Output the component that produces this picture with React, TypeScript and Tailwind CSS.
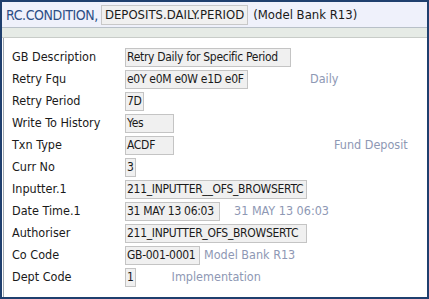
import React from "react";

const rows: { label: string; value: string; w: number; note?: string; noteGap?: number }[] = [
  { label: "GB Description", value: "Retry Daily for Specific Period", w: 166 },
  { label: "Retry Fqu", value: "e0Y e0M e0W e1D e0F", w: 123, note: "Daily", noteGap: 62 },
  { label: "Retry Period", value: "7D", w: 19 },
  { label: "Write To History", value: "Yes", w: 49 },
  { label: "Txn Type", value: "ACDF", w: 49, note: "Fund Deposit", noteGap: 160 },
  { label: "Curr No", value: "3", w: 9 },
  { label: "Inputter.1", value: "211_INPUTTER__OFS_BROWSERTC", w: 182 },
  { label: "Date Time.1", value: "31 MAY 13 06:03", w: 95, note: "31 MAY 13 06:03", noteGap: 14 },
  { label: "Authoriser", value: "211_INPUTTER_OFS_BROWSERTC", w: 182 },
  { label: "Co Code", value: "GB-001-0001", w: 75, note: "Model Bank R13", noteGap: 4 },
  { label: "Dept Code", value: "1", w: 9, note: "Implementation", noteGap: 36 },
];

export default function App() {
  return (
    <div
      className="w-[429px] h-[299px] border-2 border-[#1f3f6e] bg-white flex flex-col overflow-hidden"
      style={{ fontFamily: '"DejaVu Sans Condensed", "Liberation Sans", sans-serif' }}
    >
      <div className="h-[26px] bg-[#eff1fb] flex items-center pl-[4px] border-b border-[#b8c0c8]">
        <span className="text-[14px] tracking-[-0.4px] text-[#2c4f86] leading-none">RC.CONDITION,</span>
        <span className="ml-[3px] text-[13px] text-[#1a1a1a] bg-[#f0f0f0] border border-[#c8c8c8] px-[3px] h-[20px] flex items-center">
          DEPOSITS.DAILY.PERIOD
        </span>
        <span className="ml-[5px] text-[13px] text-[#1a1a1a]">(Model Bank R13)</span>
      </div>
      <div className="h-[10px] bg-[#e6ebe6] border-b border-[#c8ccc8]" />
      <div className="flex-1 ml-[1px] border-l border-[#a0a8b0] pl-[8px] pt-[8px] flex flex-col">
        {rows.map((r) => (
          <div key={r.label} className="h-[22px] flex items-center text-[12.5px] text-[#1a1a1a]">
            <span className="w-[113px] shrink-0">{r.label}</span>
            <span
              className="h-[19px] bg-[#f0f0f0] border border-[#c4c4c4] flex items-center px-[1px] whitespace-nowrap text-[12px] tracking-[-0.3px] shrink-0"
              style={{ minWidth: r.w }}
            >
              {r.value}
            </span>
            {r.note && (
              <span className="text-[#8e98b4] whitespace-nowrap" style={{ marginLeft: r.noteGap }}>
                {r.note}
              </span>
            )}
          </div>
        ))}
      </div>
    </div>
  );
}
